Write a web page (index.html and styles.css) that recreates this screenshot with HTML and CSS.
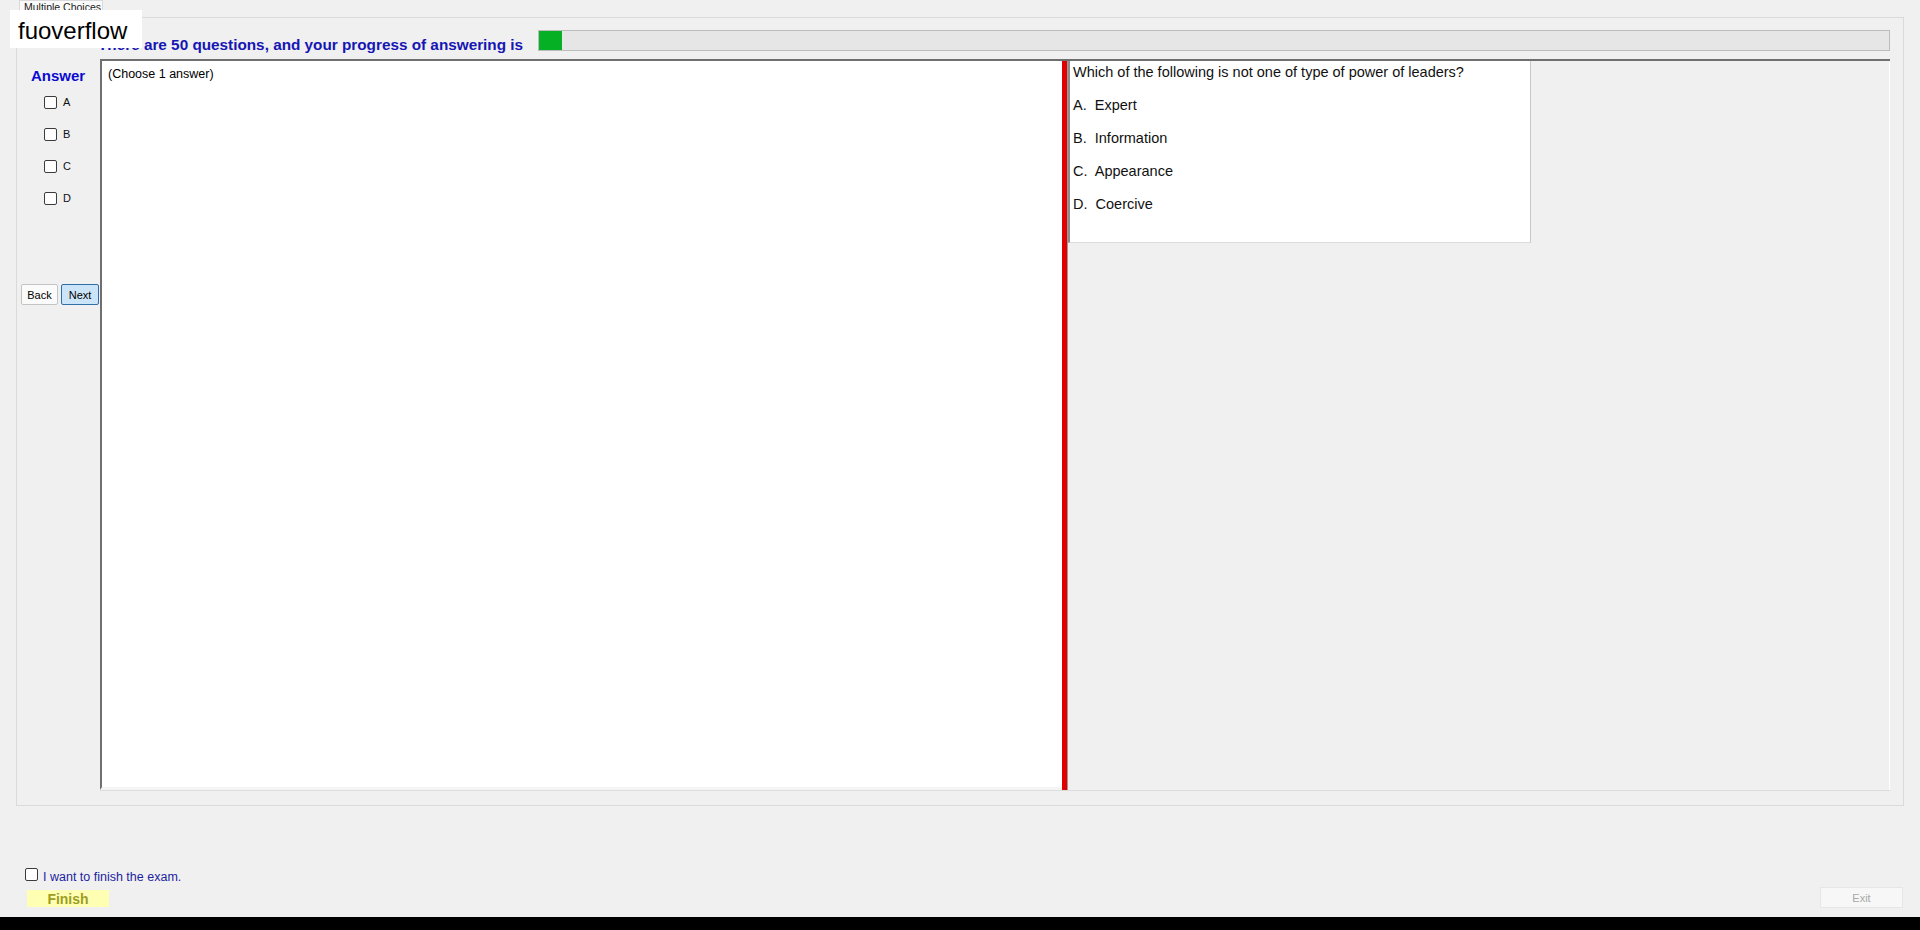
FILE: index.html
```html
<!DOCTYPE html>
<html>
<head>
<meta charset="utf-8">
<title>Multiple Choices</title>
<link rel="stylesheet" href="styles.css">
</head>
<body>
<div class="window">
  <div class="tabstrip"><div class="tab">Multiple Choices</div></div>
  <div class="tabpanel">
    <div class="progress-row">
      <div class="title">There are 50 questions, and your progress of answering is</div>
      <div class="progress"><div class="progress-fill" style="width:23px"></div></div>
    </div>
    <div class="main-row">
      <div class="sidebar">
        <div class="answer-title">Answer</div>
        <div class="opts-list">
          <label class="opt"><span class="cb"></span>A</label>
          <label class="opt"><span class="cb"></span>B</label>
          <label class="opt"><span class="cb"></span>C</label>
          <label class="opt"><span class="cb"></span>D</label>
        </div>
        <div class="nav">
          <button class="btn btn-back">Back</button>
          <button class="btn btn-next">Next</button>
        </div>
      </div>
      <div class="split">
        <div class="pane-left">(Choose 1 answer)</div>
        <div class="splitter"></div>
        <div class="pane-right">
          <div class="question">
            <p class="q">Which of the following is not one of type of power of leaders?</p>
            <div class="choices">
              <p class="o">A.&nbsp; Expert</p>
              <p class="o">B.&nbsp; Information</p>
              <p class="o">C.&nbsp; Appearance</p>
              <p class="o">D.&nbsp; Coercive</p>
            </div>
          </div>
        </div>
      </div>
    </div>
  </div>
  <div class="footer">
    <label class="finish-check"><span class="cb"></span><span class="finish-label">I want to finish the exam.</span></label>
    <div class="footer-row">
      <button class="finish">Finish</button>
      <button class="exit" disabled>Exit</button>
    </div>
  </div>
  <div class="taskbar"></div>
</div>
<div class="watermark">fuoverflow</div>
</body>
</html>
```

FILE: styles.css
```css
* { box-sizing: border-box; }
html, body { margin: 0; padding: 0; }
body {
  width: 1920px;
  height: 930px;
  overflow: hidden;
  background: #f0f0f0;
  font-family: "Liberation Sans", Arial, sans-serif;
  color: #000;
  position: relative;
}
.window { display: flex; flex-direction: column; height: 930px; }

.tabstrip { height: 17px; padding-left: 19px; display: flex; align-items: flex-end; flex: none; }
.tab {
  width: 84px; height: 18px; margin-bottom: -1px;
  background: #fafafa; border: 1px solid #dadada; border-bottom: none;
  font-size: 10.5px; line-height: 12px; padding: 0 0 0 4px; color: #222;
  position: relative; z-index: 1; white-space: nowrap; overflow: hidden;
}

.tabpanel {
  flex: none; height: 789px; margin: 0 16px;
  border: 1px solid #dadada;
  display: flex; flex-direction: column;
}
.progress-row {
  display: flex; align-items: flex-end;
  margin-top: 12px; height: 21px;
  padding-left: 81px; padding-right: 13px;
}
.title {
  font-size: 15.3px; font-weight: bold; color: #1616b4;
  line-height: 17px; white-space: nowrap; margin-bottom: -2px; flex: none;
}
.progress {
  flex: 1; margin-left: 15px; height: 21px;
  border: 1px solid #bcbcbc; background: #e6e6e6;
}
.progress-fill { height: 100%; background: #06b025; }

.main-row { display: flex; margin-top: 8px; height: 732px; }
.sidebar { width: 83px; flex: none; display: flex; flex-direction: column; }
.answer-title {
  font-size: 15px; font-weight: bold; color: #0a0ad2;
  padding-left: 14px; margin-top: 8px; line-height: 18px;
}
.opts-list { margin-top: 1px; }
.opt {
  display: flex; align-items: center; height: 32px;
  padding-left: 27px; font-size: 11px; color: #111;
}
.cb {
  width: 13px; height: 13px; flex: none;
  border: 1px solid #3c3c3c; border-radius: 2px; background: #fff;
  margin-right: 6px;
}
.nav { display: flex; gap: 3px; padding-left: 4px; margin-top: 70px; }
.btn {
  height: 21px; padding: 0; border-radius: 2px;
  font-family: "Liberation Sans", Arial, sans-serif; font-size: 11px; color: #000;
}
.btn-back { width: 37px; border: 1px solid #c4c4c4; background: #fbfbfb; }
.btn-next { width: 38px; border: 1px solid #2f6fa8; background: #cce4f7; }

.split {
  flex: 1; display: flex; margin-right: 13px;
  border-top: 2px solid #6f6f6f;
  border-bottom: 1px solid #dcdcdc;
}
.pane-left {
  width: 962px; flex: none; background: #fff;
  border-left: 2px solid #6f6f6f;
  border-bottom: 3px solid #f4f4f4;
  padding: 6px 0 0 6px;
  font-size: 12.5px; line-height: 15px;
}
.splitter { width: 6px; flex: none; background: #e00000; border-right: 1px solid #9a9a9a; }
.pane-right { flex: 1; background: #f0f0f0; border-right: 1px solid #fff; }
.question {
  width: 463px; height: 182px; background: #fff;
  border-left: 2px solid #8c8c8c; border-right: 1px solid #c8c8c8; border-bottom: 1px solid #dcdcdc;
  padding: 1px 0 0 3px;
  font-size: 14.5px; color: #111;
}
.q { margin: 0; line-height: 20px; white-space: nowrap; }
.choices { margin-top: 7px; }
.o { margin: 0; line-height: 33px; }

.footer { flex: none; height: 111px; padding: 62px 17px 0 25px; }
.finish-check {
  display: flex; align-items: center; height: 13px;
  font-size: 12.5px; color: #1e1ea0;
}
.finish-check .cb { margin-right: 5px; }
.finish-label { position: relative; top: 2px; }
.footer-row {
  display: flex; justify-content: space-between; align-items: flex-start;
  margin-top: 6px; height: 21px;
}
.finish {
  margin-left: 2px; margin-top: 3px; width: 82px; height: 17px; padding: 0;
  background: #ffffb4; border: none;
  font-family: "Liberation Sans", Arial, sans-serif; font-weight: bold; font-size: 14px;
  color: #9d9d1e;
}
.exit {
  width: 83px; height: 21px; padding: 0;
  background: #f7f7f7; border: 1px solid #e6e6e6;
  color: #a8a8a8;
  font-family: "Liberation Sans", Arial, sans-serif; font-size: 11px;
}
.taskbar { flex: none; height: 13px; background: #000; }

.watermark {
  position: absolute; left: 10px; top: 10px;
  width: 132px; height: 38px;
  background: #fff; color: #000;
  font-size: 24px; line-height: 35px;
  padding: 3px 0 0 8px;
  z-index: 5;
}
```
